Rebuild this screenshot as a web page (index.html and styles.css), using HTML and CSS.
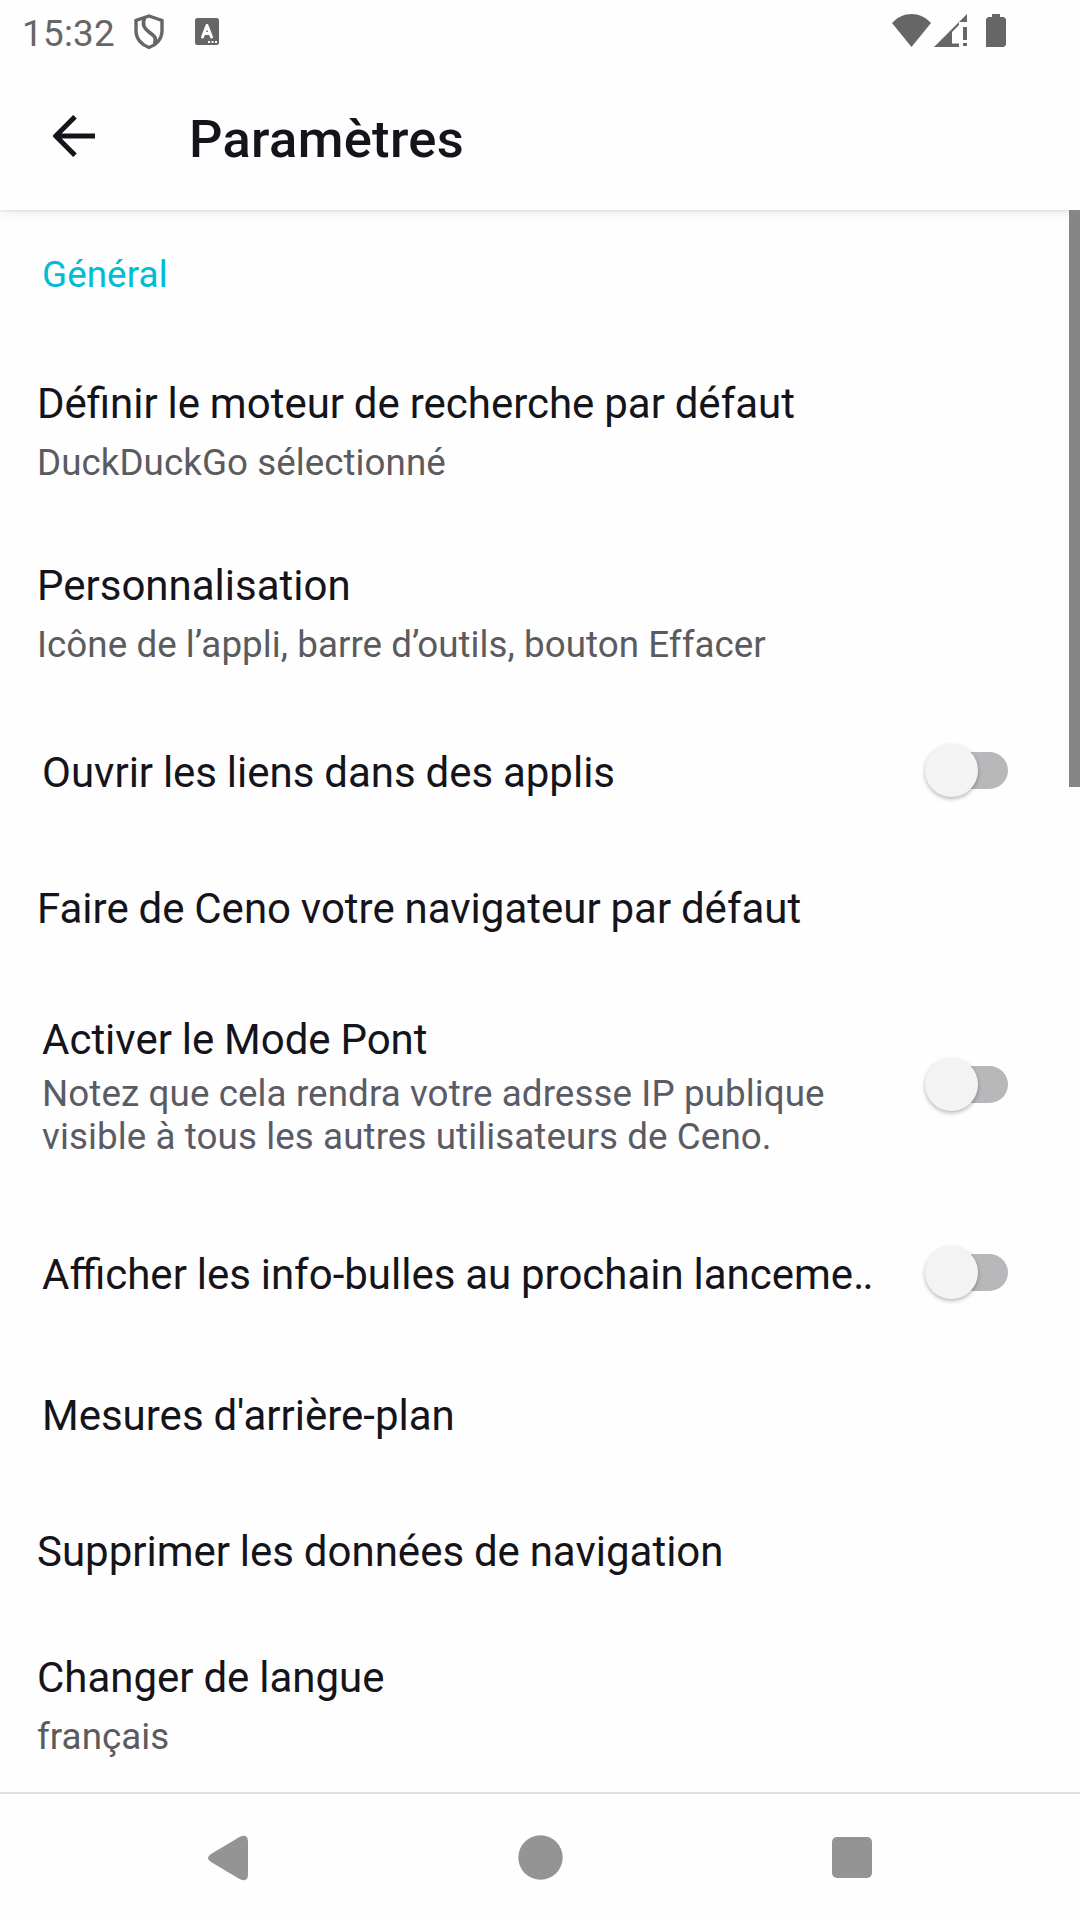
FILE: index.html
```html
<!DOCTYPE html>
<html lang="fr">
<head>
<meta charset="utf-8">
<title>Paramètres</title>
<link rel="stylesheet" href="styles.css">
</head>
<body>
<div class="screen">
  <header class="status-bar">
    <span class="clock">15:32</span>
    <svg class="shield" width="30" height="36" viewBox="0 0 30 36"><path d="M15 2 28 6.500V17C28 25 22 31 15 33.500 8 31 2 25 2 17V6.500Z" fill="none" stroke="#666" stroke-width="3.4"/><path d="M10.500 4C8 11 10 14 15 18 20.500 22 23 24 20.500 30" fill="none" stroke="#666" stroke-width="3.6"/></svg>
    <svg class="keyboard" width="24" height="27" viewBox="0 0 24 27"><rect width="24" height="27" rx="2.500" fill="#666"/><path d="M7.500 19 12 7.500 16.500 19M9 15.500H15" fill="none" stroke="#fefefe" stroke-width="3" stroke-linecap="round" stroke-linejoin="round"/><path d="M13 23h2v2h-2zM16.500 23h2v2h-2zM20 23h2v2h-2z" fill="#fefefe"/></svg>
    <div class="indicators">
      <svg class="wifi" width="39" height="33" viewBox="0 0 39 33"><path d="M0 9C11-3 28-3 39 9L19.500 33Z" fill="#666"/></svg>
      <svg class="signal" width="34" height="33" viewBox="0 0 34 33"><path d="M0 33 33 0V8H25V11L18 18V29.500H25V33ZM29 13h4v13h-4zM29 29h4v3h-4z" fill="#666"/></svg>
      <svg class="battery" width="20" height="33" viewBox="0 0 20 33"><path d="M6 0h8v3h4l2 2v26l-2 2H0V5l2-2h4z" fill="#666"/></svg>
    </div>
  </header>

  <div class="toolbar">
    <svg class="back" width="42" height="42" viewBox="0 0 42 42"><path d="M42 21H3M22 1.700 2.700 21 22 40.300" fill="none" stroke="#15141a" stroke-width="5"/></svg>
    <h1 class="heading">Paramètres</h1>
  </div>

  <main class="content">
    <h2 class="category">Général</h2>
    <ul class="list">
      <li class="row row-double">
        <div class="title">Définir le moteur de recherche par défaut</div>
        <div class="summary">DuckDuckGo sélectionné</div>
      </li>
      <li class="row row-double">
        <div class="title">Personnalisation</div>
        <div class="summary">Icône de l’appli, barre d’outils, bouton Effacer</div>
      </li>
      <li class="row row-switch links">
        <div class="title">Ouvrir les liens dans des applis</div>
        <span class="switch"></span>
      </li>
      <li class="row default-browser"><div class="title">Faire de Ceno votre navigateur par défaut</div></li>
      <li class="row row-switch bridge">
        <div class="label">
          <div class="title">Activer le Mode Pont</div>
          <div class="note">Notez que cela rendra votre adresse IP publique<br>visible à tous les autres utilisateurs de Ceno.</div>
        </div>
        <span class="switch"></span>
      </li>
      <li class="row row-switch tips">
        <div class="title">Afficher les info-bulles au prochain lanceme<span class="dots">..</span></div>
        <span class="switch"></span>
      </li>
      <li class="row inset metrics"><div class="title">Mesures d'arrière-plan</div></li>
      <li class="row clear-data"><div class="title">Supprimer les données de navigation</div></li>
      <li class="row language">
        <div class="title">Changer de langue</div>
        <div class="summary">français</div>
      </li>
    </ul>
    <div class="scrollbar"></div>
  </main>

  <nav class="nav-bar">
    <svg width="40" height="46" viewBox="0 0 40 46"><path d="M3 19 31.500 2Q40-2 40 7V39Q40 48 31.500 44L3 27Q-3 23 3 19Z" fill="#949494"/></svg>
    <svg width="45" height="45" viewBox="0 0 45 45"><circle cx="22.500" cy="22.500" r="22.200" fill="#949494"/></svg>
    <svg width="40" height="41" viewBox="0 0 40 41"><rect width="40" height="41" rx="5" fill="#949494"/></svg>
  </nav>
</div>
</body>
</html>
```
FILE: styles.css
```css
* { box-sizing: border-box; }

body {
  margin: 0;
  background: #fefefe;
  color: #15141a;
  font-family: Roboto, "Noto Sans", sans-serif;
}

.screen {
  display: flex;
  flex-direction: column;
  width: 1080px;
  height: 1920px;
  overflow: hidden;
}

svg { display: block; flex: none; }

.status-bar {
  display: flex;
  height: 63px;
  padding: 0 74px 0 22px;
  color: #666;
}

.clock {
  width: 112px;
  padding-top: 12px;
  font-size: 36.75px;
  letter-spacing: .3px;
  line-height: 43px;
  white-space: nowrap;
}

.shield { margin-top: 14px; }
.keyboard { margin: 18px 0 0 31px; }
.indicators { display: flex; margin: 14px 0 0 auto; }
.signal { margin-left: 3px; }
.battery { margin-left: 18px; }

.toolbar {
  display: flex;
  align-items: center;
  height: 147px;
  padding: 0 53px;
  box-shadow: 0 1px 3px rgba(0, 0, 0, .11), 0 4px 12px rgba(0, 0, 0, .06);
  clip-path: inset(0 0 -24px 0);
}

.back { margin-bottom: 1px; }

.heading {
  margin: 4px 0 0 94px;
  font-size: 52.5px;
  font-weight: 500;
  letter-spacing: .3px;
  line-height: 62px;
}

.content {
  position: relative;
  flex: 1;
}

.category {
  height: 131px;
  margin: 0;
  padding: 43px 42px 0;
  color: #00bcd4;
  font-size: 36.75px;
  font-weight: 400;
  letter-spacing: .1px;
  line-height: 43px;
}

.list { margin: 0; padding: 0; list-style: none; }
.row { padding: 0 37px; white-space: nowrap; }
.title { font-size: 42px; line-height: 50px; word-spacing: -.6px; }
.dots { letter-spacing: -1.8px; }
.summary { margin-top: 12px; color: #5b5b5e; font-size: 36.75px; letter-spacing: .05px; line-height: 43px; }
.note { margin-top: 7px; color: #5b5b66; font-size: 36.75px; letter-spacing: .09px; line-height: 43px; }

.row-double { height: 182px; padding-top: 38px; }
.row-switch {
  display: flex;
  align-items: center;
  justify-content: space-between;
  padding: 0 72px 0 42px;
}
.inset { padding-left: 42px; }

.links { height: 135px; }
.links .switch { margin-bottom: 4px; }
.default-browser { height: 137px; padding-top: 44px; }
.bridge { height: 215px; }
.bridge .label { padding-top: 4px; }
.tips { height: 160px; }
.tips .title { padding-top: 6px; }
.metrics { height: 148px; padding-top: 39px; }
.clear-data { height: 126px; padding-top: 27px; }
.language { padding-top: 27px; }

.switch {
  position: relative;
  width: 80px;
  height: 37px;
  border-radius: 19px;
  background: #b8b8ba;
}
.switch::before {
  content: "";
  position: absolute;
  top: -8px;
  left: -3px;
  width: 53px;
  height: 53px;
  border-radius: 50%;
  background: #f3f3f3;
  box-shadow: 0 2px 4px rgba(0, 0, 0, .28);
}

.scrollbar {
  position: absolute;
  top: 0;
  right: 0;
  width: 11px;
  height: 577px;
  background: #858688;
}

.nav-bar {
  display: flex;
  align-items: center;
  justify-content: space-between;
  height: 128px;
  padding: 1px 208px 0;
  border-top: 2px solid #e0e0e0;
}
```
